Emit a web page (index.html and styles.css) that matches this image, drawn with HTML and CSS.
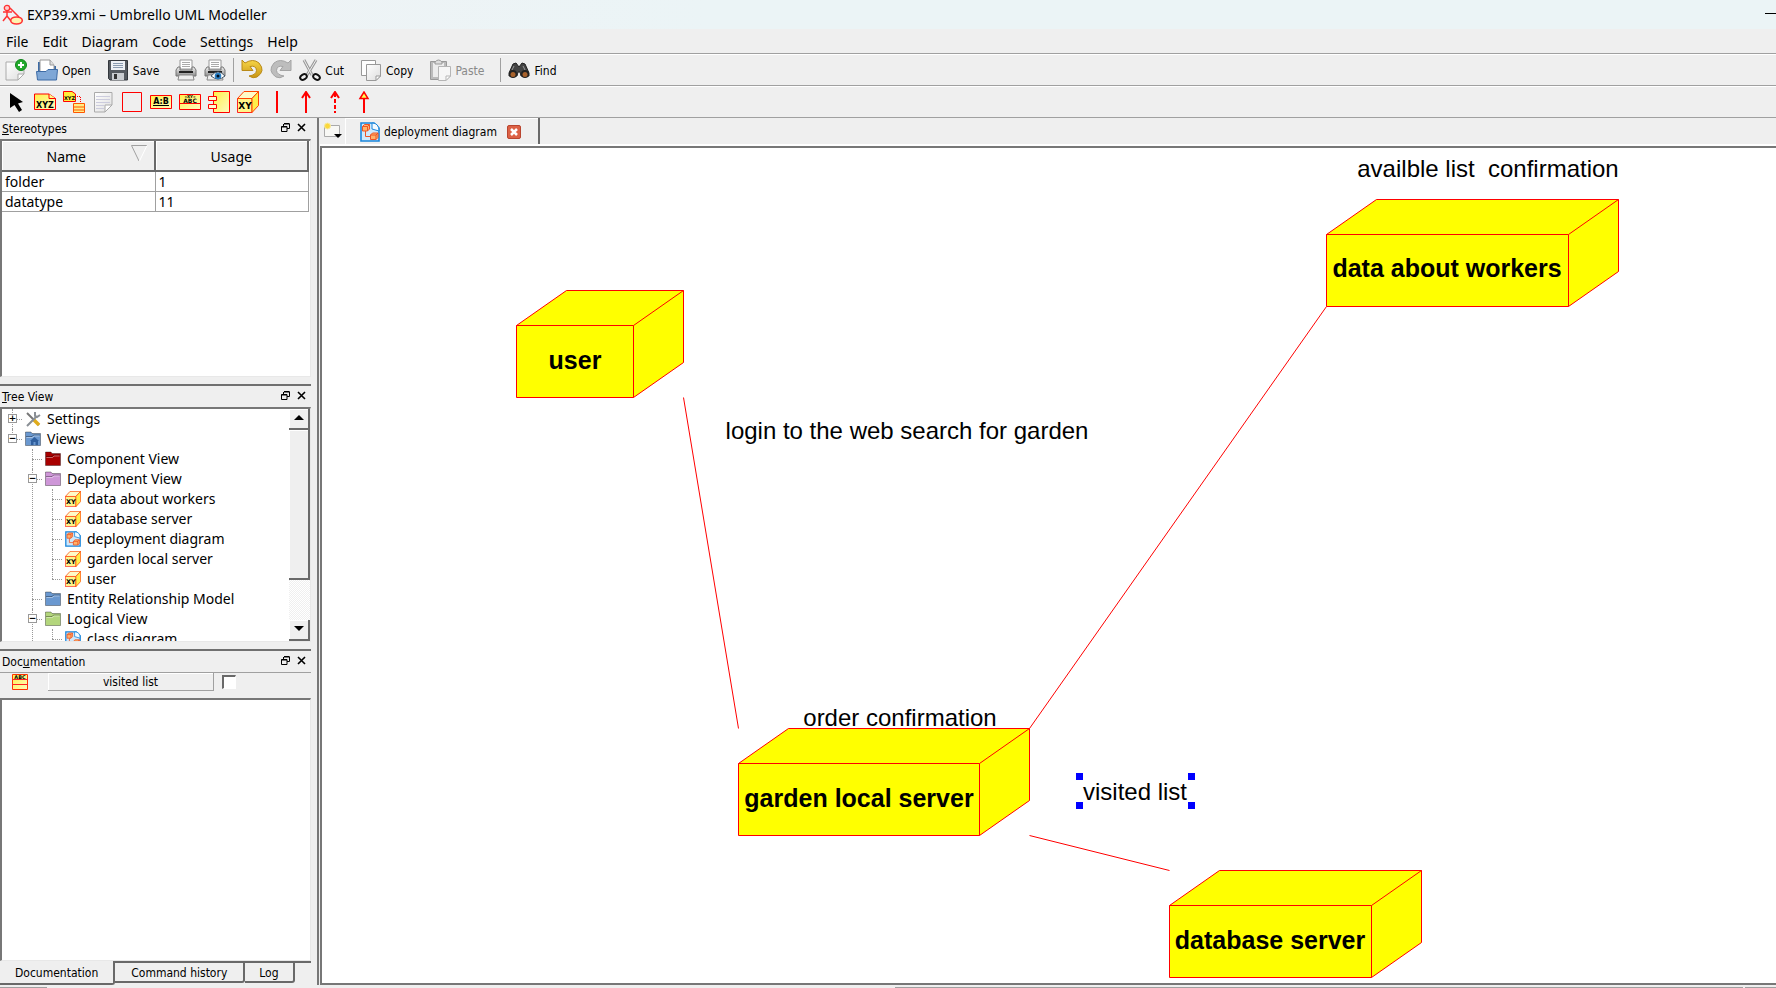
FILE: index.html
```html
<!DOCTYPE html>
<html lang="en">
<head>
<meta charset="utf-8">
<title>EXP39.xmi – Umbrello UML Modeller</title>
<link rel="stylesheet" href="styles.css">
</head>
<body>
<svg class="defs" aria-hidden="true">
  <defs>
    <linearGradient id="cream" x1="0" y1="0" x2="1" y2="1"><stop offset="0" stop-color="#fff04a"/><stop offset="1" stop-color="#fffbc0"/></linearGradient>
    <linearGradient id="paper" x1="0" y1="0" x2="1" y2="1"><stop offset="0" stop-color="#fff"/><stop offset="1" stop-color="#dedede"/></linearGradient>
    <linearGradient id="gold" x1="0" y1="0" x2="0" y2="1"><stop offset="0" stop-color="#f7d648"/><stop offset="1" stop-color="#c99512"/></linearGradient>
    <linearGradient id="steel" x1="0" y1="0" x2="0" y2="1"><stop offset="0" stop-color="#f4f4f4"/><stop offset="1" stop-color="#8c8c8c"/></linearGradient>
    <symbol id="node" viewBox="0 0 22 22">
      <path d="M.500 7.500H15V21.500H.500Z" fill="#fff58a" stroke="#f22"/>
      <path d="M7 .500H21.500L15 7.500H.500Z" fill="#fffbc8" stroke="#f40"/>
      <path d="M15 7.500 21.500.500V14.500L15 21.500Z" fill="#ffee4a" stroke="#f40"/>
      <text x="8" y="18" class="glyph" font-size="9">XY</text>
    </symbol>
    <symbol id="diagram" viewBox="0 0 20 20">
      <path d="M1 1H14L19 6V19H1Z" fill="#cfe8fb" stroke="#1b86dc" stroke-width="1.6"/>
      <path d="M12 1Q19 1 19 9L12 7Z" fill="#f3faff" stroke="#1b86dc"/>
      <path d="M2.500 4.500 4.500 2.500H9.500V7L7.500 9H2.500ZM10.500 13 12.500 11H18V15.500L16 17.500H10.500Z" fill="#ffb36b" stroke="#ee5426"/>
      <path d="M2.500 4.500H7.500V9M7.500 4.500 9.500 2.500M10.500 13H16V17.500M16 13 18 11M5.500 9V14.500H10.500" fill="none" stroke="#ee5426"/>
    </symbol>
    <symbol id="folder" viewBox="0 0 16 16">
      <path d="M.500 3V1H6L7 2.500H15.500V14.500H.500Z" fill="currentColor" stroke="#0005"/>
      <path d="M1 5.500H7L8.500 4H15" fill="none" stroke="#0005"/>
      <path d="M1.500 6.500H7.500L9 5H14.500" fill="none" stroke="#fff6"/>
    </symbol>
    <symbol id="printer" viewBox="0 0 22 22">
      <path d="M5 1H17V10H5Z" fill="#fff" stroke="#999"/><path d="M7 3.500H15M7 5.500H15M7 7.500H15" stroke="#aaa"/>
      <path d="M3 8H5V11H17V8H19L21 11V17H1V11Z" fill="url(#steel)" stroke="#777"/>
      <path d="M4 12H18V14H4Z" fill="#222"/><path d="M4 16H18L19 21H3Z" fill="#eee" stroke="#888"/>
    </symbol>
    <symbol id="float" viewBox="0 0 9 9"><path d="M3 1H8.500V5.500H6M3 .500H8.500M2.500 1V3M.500 3.500H6V8.500H.500ZM.500 4H6" fill="none" stroke="#000"/></symbol>
    <symbol id="close" viewBox="0 0 9 9"><path d="M1 1 8 8M8 1 1 8" stroke="#000" stroke-width="1.6"/></symbol>
  </defs>
</svg>
<div class="window">
  <header class="titlebar">
    <svg class="app-icon" viewBox="0 0 22 22"><circle cx="5" cy="4" r="2.700" fill="#fcc" stroke="#f33" stroke-width="1.300"/><path d="M1 8H10M5 7V12M5 12 1 17M5 12 9 17M8 4 17 13" fill="none" stroke="#f33" stroke-width="1.500"/><ellipse cx="14.500" cy="16.500" rx="5.800" ry="3.500" fill="#fff3b0" stroke="#f33" stroke-width="1.600"/></svg>
    <h1 class="title">EXP39.xmi – Umbrello UML Modeller</h1>
    <button class="minimize" aria-label="Minimize"></button>
  </header>
  <nav class="menubar">
    <button>File</button><button>Edit</button><button>Diagram</button><button>Code</button><button>Settings</button><button>Help</button>
  </nav>
  <div class="toolbar main-tools">
    <button class="tool" aria-label="New"><svg viewBox="0 0 22 22"><path d="M1 3H19V15L13 21H1Z" fill="url(#paper)" stroke="#aaa"/><path d="M19 15H13V21Z" fill="#fff" stroke="#aaa"/><circle cx="16" cy="6" r="5.500" fill="#22a92c" stroke="#11861b"/><path d="M16 3V9M13 6H19" stroke="#fff" stroke-width="2"/></svg></button>
    <button class="tool"><svg viewBox="0 0 22 22"><path d="M2 3H8V7H20V15H2Z" fill="#3d6ba5"/><path d="M4 1H14L18 6V13H4Z" fill="#fff" stroke="#999"/><path d="M14 1V6H18" fill="#ddd" stroke="#999"/><path d="M.500 12.500H10L12 10.500H21.500L20.500 21H1.500Z" fill="#7fa7d6" stroke="#3d6ba5"/></svg><span>Open</span></button>
    <button class="tool"><svg viewBox="0 0 22 22"><path d="M1.500 1.500H20.500V21H3L1.500 19.500Z" fill="#555a60" stroke="#33373c"/><path d="M4 2H18V11H4Z" fill="#eef1f5"/><path d="M6 4.500H16M6 6.500H16M6 8.500H16" stroke="#8a9bb0"/><path d="M5 14H17V21H5Z" fill="#c9ccd0"/><path d="M7 15H10V20H7Z" fill="#333"/></svg><span>Save</span></button>
    <button class="tool" aria-label="Print"><svg><use href="#printer"/></svg></button>
    <button class="tool" aria-label="Print preview"><svg viewBox="0 0 22 22"><use href="#printer" width="22" height="22"/><path d="M7 17Q14 9 21 17Q14 23 7 17Z" fill="#fff" stroke="#456"/><circle cx="14" cy="17" r="3.300" fill="#2a7fc4"/><circle cx="14" cy="17" r="1.500" fill="#012"/></svg></button>
    <span class="separator"></span>
    <button class="tool" aria-label="Undo"><svg viewBox="0 0 22 22"><path d="M1 1 4 4Q12-1 18 4Q25 12 16 18Q12 20 8 17Q15 16 15.500 11.500Q15 6 9 7.500L12 11.500H1Z" fill="url(#gold)" stroke="#b98a18"/></svg></button>
    <button class="tool" aria-label="Redo" disabled><svg viewBox="0 0 22 22"><path d="M21 1 18 4Q10-1 4 4Q-3 12 6 18Q10 20 14 17Q7 16 6.500 11.500Q7 6 13 7.500L10 11.500H21Z" fill="#bdbdbd" stroke="#a4a4a4"/></svg></button>
    <button class="tool"><svg viewBox="0 0 22 22"><path d="M5 1 13 16M17 1 8 16" stroke="#999" stroke-width="3"/><path d="M5 1 13 16M17 1 8 16" stroke="#eee"/><ellipse cx="4.500" cy="18" rx="3.500" ry="2.500" transform="rotate(-30 4.500 18)" fill="none" stroke="#111" stroke-width="2"/><ellipse cx="17.500" cy="18" rx="3.500" ry="2.500" transform="rotate(30 17.500 18)" fill="none" stroke="#111" stroke-width="2"/></svg><span>Cut</span></button>
    <button class="tool"><svg viewBox="0 0 22 22"><path d="M1.500 1.500H15.500V16.500H1.500Z" fill="#fff" stroke="#999"/><path d="M6.500 5.500H20.500V17L16 21.500H6.500Z" fill="url(#paper)" stroke="#999"/><path d="M20.500 17H16V21.500Z" fill="#fff" stroke="#999"/></svg><span>Copy</span></button>
    <button class="tool" disabled><svg viewBox="0 0 22 22"><path d="M1.500 2.500H17.500V20.500H1.500Z" fill="#bbb" stroke="#999"/><path d="M4 4H15V18H4Z" fill="#ececec"/><path d="M6 3Q9.500-1 13 3V5H6Z" fill="#ddd" stroke="#999"/><path d="M9.500 7.500H21.500V17L17 21.500H9.500Z" fill="#f6f6f6" stroke="#b5b5b5"/><path d="M21.500 17H17V21.500Z" fill="#fff" stroke="#b5b5b5"/></svg><span>Paste</span></button>
    <span class="separator"></span>
    <button class="tool"><svg viewBox="0 0 22 22"><path d="M5 5 8 4 11 8 14 4 17 5 21 14V17H13L12 13H10L9 17H1V14Z" fill="#444" stroke="#222"/><circle cx="5" cy="15" r="4" fill="#222"/><circle cx="17" cy="15" r="4" fill="#222"/><circle cx="5" cy="15.500" r="2.500" fill="#a8622c"/><circle cx="17" cy="15.500" r="2.500" fill="#a8622c"/><path d="M6 7 4 11M15 7 17 11" stroke="#999"/></svg><span>Find</span></button>
  </div>
  <div class="toolbar uml-tools">
    <button class="tool" aria-label="Select"><svg viewBox="0 0 22 22"><path d="M5 2V17L9.500 14L14 21L17 19L13 12.500L18 11Z" fill="#000"/></svg></button>
    <button class="tool" aria-label="Object"><svg viewBox="0 0 22 22"><path d="M.500 3H15L21.500 7.500V18.500H.500Z" fill="url(#cream)" stroke="#f00"/><path d="M15 3V7.500H21.500" fill="#ff8" stroke="#f00"/><text x="11" y="16.500" class="glyph" font-size="8">XYZ</text></svg></button>
    <button class="tool" aria-label="Instance"><svg viewBox="0 0 22 22"><path d="M.500.500H9L12.500 3V10.500H.500Z" fill="#ffee3a" stroke="#f00"/><text x="6.500" y="8.500" class="glyph" font-size="5">XYZ</text><path d="M12 5.500H17.500V12" fill="none" stroke="#f00" stroke-dasharray="1 1"/><path d="M10.500 12.500H21.500V21.500H10.500ZM10.500 16H21.500M10.500 19H21.500" fill="#ffee85" stroke="#f50"/></svg></button>
    <button class="tool" aria-label="Note"><svg viewBox="0 0 22 22"><path d="M2.500 1.500H20V14L13 21H2.500Z" fill="url(#paper)" stroke="#aaa"/><path d="M4 5.500H18M4 8.500H18M4 11.500H18M4 14.500H12M4 17.500H12" stroke="#ccd"/><path d="M20 14H13V21Z" fill="#fff" stroke="#aaa"/></svg></button>
    <button class="tool" aria-label="Box"><svg viewBox="0 0 22 22"><path d="M1.500 1.500H20.500V20.500H1.500Z" fill="none" stroke="#f00"/></svg></button>
    <button class="tool" aria-label="Instance name"><svg viewBox="0 0 22 22"><path d="M.500 4.500H21.500V17.500H.500Z" fill="url(#cream)" stroke="#f00"/><text x="11" y="13" class="glyph" font-size="8">A:B</text><path d="M3 14.500H19" stroke="#000"/></svg></button>
    <button class="tool" aria-label="Interface"><svg viewBox="0 0 22 22"><path d="M.500 3.500H21.500V18.500H.500ZM.500 12.500H21.500" fill="url(#cream)" stroke="#f00"/><text x="11" y="7" class="glyph" font-size="4">«XY»</text><text x="11" y="11.500" class="glyph" font-size="6">ABC</text></svg></button>
    <button class="tool" aria-label="Component"><svg viewBox="0 0 22 22"><path d="M5.500.500H21.500V21.500H5.500Z" fill="url(#cream)" stroke="#f00"/><path d="M.500 5.500H8.500V9.500H.500ZM.500 13.500H8.500V17.500H.500Z" fill="#fffbd0" stroke="#f00"/></svg></button>
    <button class="tool" aria-label="Node"><svg><use href="#node"/></svg></button>
    <button class="tool" aria-label="Association"><svg viewBox="0 0 22 22"><path d="M11 0V22" stroke="#f00" stroke-width="2"/></svg></button>
    <button class="tool" aria-label="Directional association"><svg viewBox="0 0 22 22"><path d="M11 1V22M7 7 11 1 15 7" fill="none" stroke="#f00" stroke-width="2"/></svg></button>
    <button class="tool" aria-label="Dependency"><svg viewBox="0 0 22 22"><path d="M11 2V22" stroke="#f00" stroke-width="2" stroke-dasharray="4 2"/><path d="M7 7 11 1 15 7" fill="none" stroke="#f00" stroke-width="2"/></svg></button>
    <button class="tool" aria-label="Generalization"><svg viewBox="0 0 22 22"><path d="M11 7V22" stroke="#f00" stroke-width="2"/><path d="M7 7.500 11 1 15 7.500Z" fill="#ff5" stroke="#f00" stroke-width="1.500"/></svg></button>
  </div>
  <main class="workspace">
    <aside class="docks">
      <section class="dock stereotypes">
        <div class="dock-title"><h2><u>S</u>tereotypes</h2><button aria-label="Float"><svg><use href="#float"/></svg></button><button aria-label="Close"><svg><use href="#close"/></svg></button></div>
        <div class="well">
          <table class="grid">
            <thead><tr><th><span class="sorted">Name<svg viewBox="0 0 17 17"><path d="M16 .500H.500L8 16" fill="none" stroke="#a0a0a0"/><path d="M16 .500 8.500 16" stroke="#fff"/></svg></span></th><th>Usage</th></tr></thead>
            <tbody><tr><td>folder</td><td>1</td></tr><tr><td>datatype</td><td>11</td></tr></tbody>
          </table>
        </div>
      </section>
      <section class="dock treeview">
        <div class="dock-title"><h2><u>T</u>ree View</h2><button aria-label="Float"><svg><use href="#float"/></svg></button><button aria-label="Close"><svg><use href="#close"/></svg></button></div>
        <div class="well tree-well">
          <ul class="tree">
            <li><div class="row"><button class="expander" aria-label="Expand">+</button><svg viewBox="0 0 16 16"><path d="M2 2 14 14" stroke="#777" stroke-width="2"/><path d="M9 9 14 14" stroke="#e0ac1c" stroke-width="3.500"/><path d="M2 15 12 5M10 1V5L12 6 15 4" fill="none" stroke="#8a8f95" stroke-width="2"/></svg><span>Settings</span></div></li>
            <li><div class="row"><button class="expander" aria-label="Collapse">−</button><svg class="blue" viewBox="0 0 16 16"><use href="#folder" width="16" height="16"/><path d="M5 10 9.500 6 14 10H13V14H10.500V11H8.500V14H6V10Z" fill="#2f5f9e"/></svg><span>Views</span></div>
              <ul>
                <li><div class="row"><svg class="red"><use href="#folder"/></svg><span>Component View</span></div></li>
                <li><div class="row"><button class="expander" aria-label="Collapse">−</button><svg class="purple"><use href="#folder"/></svg><span>Deployment View</span></div>
                  <ul>
                    <li><div class="row"><svg><use href="#node"/></svg><span>data about workers</span></div></li>
                    <li><div class="row"><svg><use href="#node"/></svg><span>database server</span></div></li>
                    <li><div class="row"><svg><use href="#diagram"/></svg><span>deployment diagram</span></div></li>
                    <li><div class="row"><svg><use href="#node"/></svg><span>garden local server</span></div></li>
                    <li><div class="row"><svg><use href="#node"/></svg><span>user</span></div></li>
                  </ul>
                </li>
                <li><div class="row"><svg class="blue"><use href="#folder"/></svg><span>Entity Relationship Model</span></div></li>
                <li><div class="row"><button class="expander" aria-label="Collapse">−</button><svg class="green"><use href="#folder"/></svg><span>Logical View</span></div>
                  <ul>
                    <li><div class="row"><svg><use href="#diagram"/></svg><span>class diagram</span></div></li>
                  </ul>
                </li>
              </ul>
            </li>
          </ul>
          <div class="scrollbar">
            <button aria-label="Scroll up"><svg viewBox="0 0 10 6"><path d="M0 5 5 0 10 5Z"/></svg></button>
            <div class="track"><div class="thumb"></div></div>
            <button aria-label="Scroll down"><svg viewBox="0 0 10 6"><path d="M0 0 5 5 10 0Z"/></svg></button>
          </div>
        </div>
      </section>
      <section class="dock documentation">
        <div class="dock-title"><h2>Doc<u>u</u>mentation</h2><button aria-label="Float"><svg><use href="#float"/></svg></button><button aria-label="Close"><svg><use href="#close"/></svg></button></div>
        <div class="doc-head">
          <svg viewBox="0 0 16 16"><path d="M.500.500H15.500V15.500H.500Z" fill="url(#cream)" stroke="#f30"/><path d="M0 5.500H16M0 10.500H16" stroke="#f22"/><text x="8" y="4.500" class="glyph" font-size="5">ABC</text></svg>
          <label for="modified" class="doc-name">visited list</label>
          <input type="checkbox" id="modified">
        </div>
        <textarea class="doc-text" aria-label="Documentation text"></textarea>
        <div class="dock-tabs"><button class="active">Documentation</button><button>Command history</button><button>Log</button></div>
      </section>
    </aside>
    <section class="editor">
      <div class="tabbar">
        <button class="new-diagram" aria-label="New diagram"><svg viewBox="0 0 20 18"><path d="M1.500 3.500H16.500V14.500H1.500Z" fill="#f8f8f5" stroke="#aaa"/><circle cx="4.500" cy="4" r="3" fill="#fbd83c" stroke="#f8eba0"/><path d="M11 12H19L15 16Z" fill="#000"/></svg></button>
        <div class="tab"><svg><use href="#diagram"/></svg><span>deployment diagram</span><button class="tab-close" aria-label="Close tab"><svg viewBox="0 0 14 14"><rect x=".500" y=".500" width="13" height="13" rx="1.500" fill="#dc6145" stroke="#b9452f"/><path d="M4 4 10 10M10 4 4 10" stroke="#fff" stroke-width="2.500"/></svg></button></div>
      </div>
      <div class="canvas">
        <svg class="drawing">
          <g class="links"><path d="M361.500 249.500 416.500 580.500M1004.500 158.500 707.500 580.500M707.500 687.500 847.500 722.500"/></g>
          <g class="box"><path d="M194.500 177.500 244.500 142.500H361.500V214.500L311.500 249.500H194.500ZM194.500 177.500H311.500V249.500M311.500 177.500 361.500 142.500"/><text x="253" y="221">user</text></g>
          <g class="box"><path d="M1004.500 86.500 1054.500 51.500H1296.500V123.500L1246.500 158.500H1004.500ZM1004.500 86.500H1246.500V158.500M1246.500 86.500 1296.500 51.500"/><text x="1125" y="129">data about workers</text></g>
          <g class="box"><path d="M416.500 615.500 466.500 580.500H707.500V652.500L657.500 687.500H416.500ZM416.500 615.500H657.500V687.500M657.500 615.500 707.500 580.500"/><text x="537" y="659">garden local server</text></g>
          <g class="box"><path d="M847.500 757.500 897.500 722.500H1099.500V794.500L1049.500 829.500H847.500ZM847.500 757.500H1049.500V829.500M1049.500 757.500 1099.500 722.500"/><text x="948" y="801">database server</text></g>
          <g class="labels"><text x="585" y="291">login to the web search for garden</text><text x="1166" y="29">availble list&#160; confirmation</text><text x="578" y="578">order confirmation</text><text x="813" y="652">visited list</text></g>
          <path d="M754 625H761V632H754ZM866 625H873V632H866ZM754 654H761V661H754ZM866 654H873V661H866Z" fill="#00f"/>
        </svg>
      </div>
    </section>
  </main>
  <footer class="statusbar"><span class="status-message"></span><span class="status-zoom"></span><span class="status-end"></span></footer>
</div>
</body>
</html>
```

FILE: styles.css
```css
* { box-sizing: border-box; }
html, body { height: 100%; margin: 0; }
body { font: 12px/16px "DejaVu Sans Condensed", "Noto Sans", sans-serif; color: #000; background: #efefef; overflow: hidden; }
button { font: inherit; color: inherit; background: none; border: 0; padding: 0; margin: 0; display: flex; align-items: center; }
h1, h2 { margin: 0; font: inherit; }
ul { list-style: none; margin: 0; padding: 0; }
svg { display: block; flex: none; }
.defs { position: absolute; width: 0; height: 0; }
.glyph { font-family: "DejaVu Sans", sans-serif; font-weight: bold; text-anchor: middle; }

.window { display: flex; flex-direction: column; height: 100vh; }
.titlebar { display: flex; align-items: center; height: 29px; flex: none; padding-left: 2px; background: linear-gradient(90deg, #f0f3f5, #ebf4f6 40%, #ebf4f6); font: 14px/20px "Noto Sans", sans-serif; }
.app-icon { width: 22px; height: 22px; margin-right: 3px; }
.title { flex: 1; }
.minimize { width: 11px; height: 1px; background: #000; margin-bottom: 2px; }
.menubar { display: flex; flex: none; gap: 14px; height: 25px; padding: 1px 6px 0; border-bottom: 1px solid #a0a0a0; font: 14px/20px "Noto Sans", sans-serif; }

.toolbar { display: flex; align-items: center; flex: none; height: 32px; border-top: 1px solid #fff; border-bottom: 1px solid #a0a0a0; }
.tool svg { width: 22px; height: 22px; }
.tool span { padding-top: 1px; }
.tool:disabled { color: #8a8a8a; }
.main-tools { padding-left: 5px; gap: 7px; }
.main-tools .tool { gap: 4px; margin-right: 3px; }
.main-tools .tool:has(span) { margin-right: 9px; }
.main-tools .tool[aria-label] { margin-right: 0; }
.main-tools .tool[aria-label="New"] { margin-right: 2px; }
.separator { width: 1px; height: 24px; background: #a0a0a0; }
.uml-tools { padding-left: 5px; gap: 7px; }

.workspace { display: flex; flex: 1; min-height: 0; }
.docks { display: flex; flex-direction: column; width: 311px; flex: none; }
.dock { display: flex; flex-direction: column; min-height: 0; }
.stereotypes { flex: 260 1 0; }
.treeview { flex: 257 1 0; }
.documentation { flex: 336 1 0; }
.treeview, .documentation { border-top: 2px solid #707070; margin-top: 7px; }
.dock-title { display: flex; align-items: center; height: 21px; flex: none; padding: 0 5px 0 2px; gap: 7px; }
.dock-title h2 { flex: 1; padding-top: 1px; }
.dock-title svg { width: 9px; height: 9px; margin-bottom: 2px; }
.well { flex: 1; min-height: 0; border: 2px solid #a0a0a0; border-top-color: #777; border-left-color: #777; border-right: 1px solid #e8e8e8; border-bottom: 1px solid #e8e8e8; background: #fff; overflow: hidden; }
.grid { width: 307px; border-collapse: separate; border-spacing: 0; table-layout: fixed; font: 14px/19px "Noto Sans", sans-serif; }
.grid th { height: 31px; padding: 1px 0 0; font-weight: normal; background: #efefef; border: solid #696969; border-width: 0 2px 2px 0; box-shadow: inset 1px 1px #fff; }
.grid td { height: 20px; padding: 0 3px; border: solid #a0a0a0; border-width: 0 1px 1px 0; }
.sorted { display: grid; grid-template-columns: 1fr 17px; align-items: center; padding: 0 6px 0 0; }
.sorted svg { width: 17px; height: 17px; margin-bottom: 5px; }

.tree-well { display: flex; }
.tree { flex: 1; min-width: 0; overflow: hidden; font: 14px/20px "Noto Sans", sans-serif; }
.tree ul { padding-left: 20px; }
.tree li { position: relative; }
.tree li::before { content: ""; position: absolute; left: 10px; top: 0; bottom: 0; border-left: 1px dotted #999; }
.tree > li:last-child::before { bottom: auto; height: 10px; }
.tree ul ul li:last-child::before { bottom: auto; height: 10px; }
.row { display: flex; align-items: center; gap: 6px; height: 20px; padding-left: 23px; position: relative; white-space: nowrap; }
.row::before { content: ""; position: absolute; left: 10px; width: 10px; top: 10px; border-top: 1px dotted #999; }
.row svg { width: 16px; height: 16px; }
.expander { position: absolute; left: 6px; top: 5px; width: 9px; height: 9px; border: 1px solid #999; background: #fff; justify-content: center; font: bold 9px/7px "DejaVu Sans", sans-serif; }
.blue { color: #6a98d0; }
.red { color: #a80000; }
.purple { color: #ce96d8; }
.green { color: #b3d67c; }
.scrollbar { display: flex; flex-direction: column; width: 21px; flex: none; background: repeating-conic-gradient(#efefef 0 25%, #fff 0 50%) 0 0 / 2px 2px; }
.scrollbar button, .thumb { background: #efefef; border: solid #696969; border-width: 0 2px 2px 0; box-shadow: inset 1px 1px #fff; }
.scrollbar button { height: 21px; justify-content: center; }
.scrollbar svg { width: 10px; height: 6px; }
.track { flex: 1; min-height: 0; }
.thumb { height: 79%; }

.doc-head { display: flex; align-items: center; flex: none; height: 26px; padding: 0 0 7px 12px; border-top: 1px solid #a0a0a0; }
.doc-head svg { width: 16px; height: 16px; }
.doc-name { width: 166px; height: 18px; margin: 0 8px 0 20px; padding-top: 1px; text-align: center; border: solid #a0a0a0; border-width: 0 1px 1px 0; box-shadow: inset 1px 1px #fff; }
.doc-head input { appearance: none; width: 14px; height: 14px; margin: 0; background: #fff; border: solid #696969; border-width: 2px 1px 1px 2px; border-right-color: #fff; border-bottom-color: #fff; }
.doc-text { flex: 1; min-height: 0; resize: none; border: solid #777; border-width: 2px 1px 1px 2px; border-right-color: #e8e8e8; border-bottom-color: #e8e8e8; background: #fff; margin: 0; outline: 0; }
.dock-tabs { display: flex; align-items: flex-start; flex: none; height: 24px; }
.dock-tabs button { height: 22px; padding: 1px 16px 0; border: solid #696969; border-width: 2px 2px 2px 0; border-radius: 0 0 3px 0; }
.dock-tabs button.active { height: 24px; border-top: 0; padding: 1px 15px 0; }
.dock-tabs button:last-child { padding: 1px 14px 0; }
.dock-tabs::after { content: ""; flex: 1; border-top: 2px solid #696969; }

.editor { display: flex; flex-direction: column; flex: 1; min-width: 0; margin-left: 6px; border-left: 2px solid #777; padding-left: 1px; }
.tabbar { display: flex; height: 28px; flex: none; border-bottom: 2px solid #fff; }
.new-diagram { padding-left: 3px; width: 25px; }
.new-diagram svg { width: 20px; height: 18px; }
.tab { display: flex; align-items: center; gap: 4px; padding: 1px 17px 0 15px; border-right: 2px solid #696969; box-shadow: inset 1px 1px #fff; }
.tab > svg { width: 20px; height: 20px; }
.tab span { padding-top: 1px; }
.tab-close { margin-left: 6px; }
.tab-close svg { width: 14px; height: 14px; }
.canvas { flex: 1; min-height: 0; background: #fff; border: solid #777; border-width: 2px 0 2px 2px; }
.drawing { width: 100%; height: 100%; }
.drawing text { font-family: "Liberation Sans", Arial, sans-serif; text-anchor: middle; }
.links { fill: none; stroke: #f00; }
.box path { fill: #ff0; stroke: #f00; }
.box text { font-size: 25px; font-weight: bold; }
.labels text { font-size: 24px; }

.statusbar { display: flex; flex: none; height: 3px; padding-top: 2px; }
.status-message, .status-zoom, .status-end { background: #a0a0a0; }
.status-message { width: 47px; }
.status-zoom { flex: 1; margin: 0 2px 0 848px; }
.status-end { width: 31px; }
```
